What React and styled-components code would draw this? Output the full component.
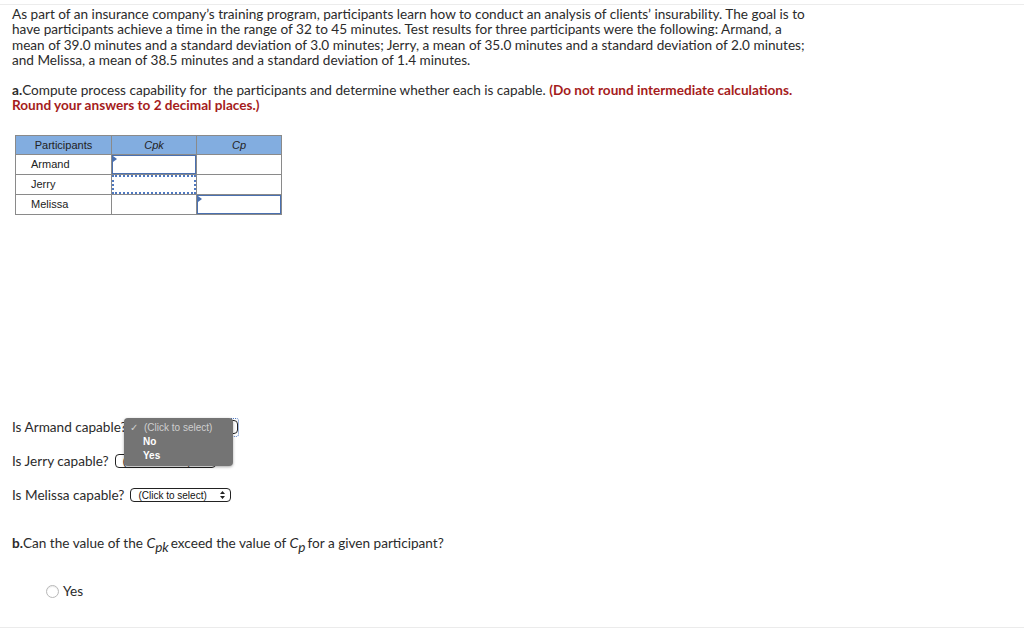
import React from "react";
import styled, { createGlobalStyle } from "styled-components";

const Global = createGlobalStyle`
  html, body { margin: 0; padding: 0; background: #fff; }
  body { font-family: Lato, "Open Sans", "Liberation Sans", sans-serif; color: #2b2b2b; }
`;

const Page = styled.div`
  width: 1024px;
  height: 632px;
  box-sizing: border-box;
  border-top: 1px solid #ececec;
  margin-top: 4px;
  position: relative;
  overflow: hidden;
`;

const Content = styled.div`
  padding: 2px 12px 0 12px;
  height: 623px;
  box-sizing: border-box;
  border-bottom: 1px solid #ebebeb;
`;

const Para = styled.p`
  margin: 0;
  font-size: 13.6px;
  line-height: 15.3px;
`;

const PartA = styled(Para)`
  margin-top: 15px;
`;

const Red = styled.b`
  color: #a51c1c;
  font-weight: 700;
`;

const Table = styled.table`
  border-collapse: collapse;
  margin: 21px 0 0 3px;
  font-family: "Liberation Sans", Arial, sans-serif;
  font-size: 11px;
  color: #222;
`;

const Th = styled.th`
  background: #82ade0;
  border: 1px solid #8a8a8a;
  font-weight: 400;
  font-style: ${(p) => (p.$italic ? "italic" : "normal")};
  height: 18px;
  width: ${(p) => p.$w}px;
  padding: 0;
  text-align: center;
`;

const Td = styled.td`
  border: 1px solid #8a8a8a;
  height: 19px;
  padding: 0 0 0 ${(p) => (p.$label ? 15 : 0)}px;
  position: relative;
`;

const Cell = styled.div`
  position: absolute;
  inset: 0;
  border: ${(p) => (p.$dotted ? "2px dotted #4e78c0" : "1px solid #4a70b0")};
  &::before {
    content: "";
    display: ${(p) => (p.$marker ? "block" : "none")};
    position: absolute;
    left: 0;
    top: 0;
    border-left: 4px solid #4a70b0;
    border-top: 3px solid transparent;
    border-bottom: 3px solid transparent;
  }
`;

const Questions = styled.div`
  margin-top: 204px;
  display: flex;
  flex-direction: column;
  gap: 18px;
  position: relative;
`;

const QRow = styled.div`
  display: flex;
  align-items: center;
  gap: 6px;
  font-size: 13.6px;
  height: 16px;
  position: relative;
`;

const Select = styled.div`
  width: ${(p) => p.$w}px;
  height: 14px;
  box-sizing: border-box;
  border: 1px solid #222;
  border-radius: 4px;
  display: flex;
  align-items: center;
  justify-content: space-between;
  padding: 0 5px 0 7px;
  font-family: "Liberation Sans", Arial, sans-serif;
  font-size: 10px;
  color: #111;
  margin-top: 1px;
  flex-shrink: 0;
`;

const Arrows = () => (
  <svg width="5" height="8" viewBox="0 0 5 8">
    <path d="M2.5 0 L5 3 H0 Z M2.5 8 L5 5 H0 Z" fill="#222" />
  </svg>
);

const Focus = styled.div`
  position: absolute;
  left: 219px;
  top: -1px;
  width: 7px;
  height: 17px;
  border: 1px dotted #4e78c0;
  border-left: none;
  border-radius: 0 3px 3px 0;
`;

const Menu = styled.div`
  position: absolute;
  left: 112px;
  top: -1px;
  width: 109px;
  height: 48px;
  background: #747474;
  border-radius: 4px;
  box-shadow: 0 1px 3px rgba(0, 0, 0, 0.35);
  padding-top: 3px;
  box-sizing: border-box;
  font-family: "Liberation Sans", Arial, sans-serif;
  font-size: 10px;
  z-index: 2;
`;

const MenuItem = styled.div`
  height: 14px;
  line-height: 14px;
  padding-left: ${(p) => (p.$check ? 6 : 19)}px;
  color: ${(p) => (p.$dim ? "#cfcfcf" : "#fff")};
  font-weight: ${(p) => (p.$dim ? 400 : 700)};
  display: flex;
  gap: 6px;
`;

const PartB = styled(Para)`
  margin-top: 32px;
`;

const Sym = styled.i`
  font-style: italic;
  font-size: 14px;
`;

const Sub = styled.span`
  font-style: italic;
  font-size: 13.6px;
  position: relative;
  top: 4px;
  margin-right: 2px;
`;

const RadioRow = styled.label`
  display: flex;
  align-items: center;
  gap: 4px;
  margin: 32px 0 0 34px;
  font-size: 13.6px;
`;

const Radio = styled.span`
  width: 11px;
  height: 11px;
  border-radius: 50%;
  border: 1px solid #b8b8b8;
  box-shadow: inset 0 1px 1px rgba(0,0,0,0.08);
  background: #fff;
`;

export default function App() {
  return (
    <Page>
      <Global />
      <Content>
        <Para>
          As part of an insurance company’s training program, participants learn how to conduct an analysis of clients’ insurability. The goal is to
          <br />
          have participants achieve a time in the range of 32 to 45 minutes. Test results for three participants were the following: Armand, a
          <br />
          mean of 39.0 minutes and a standard deviation of 3.0 minutes; Jerry, a mean of 35.0 minutes and a standard deviation of 2.0 minutes;
          <br />
          and Melissa, a mean of 38.5 minutes and a standard deviation of 1.4 minutes.
        </Para>
        <PartA>
          <b>a.</b>Compute process capability for&nbsp; the participants and determine whether each is capable.{" "}
          <Red>(Do not round intermediate calculations.</Red>
          <br />
          <Red>Round your answers to 2 decimal places.)</Red>
        </PartA>
        <Table>
          <thead>
            <tr>
              <Th $w={95}>Participants</Th>
              <Th $w={84} $italic>Cpk</Th>
              <Th $w={84} $italic>Cp</Th>
            </tr>
          </thead>
          <tbody>
            <tr>
              <Td $label>Armand</Td>
              <Td><Cell $marker /></Td>
              <Td />
            </tr>
            <tr>
              <Td $label>Jerry</Td>
              <Td><Cell $dotted /></Td>
              <Td />
            </tr>
            <tr>
              <Td $label>Melissa</Td>
              <Td />
              <Td><Cell $marker /></Td>
            </tr>
          </tbody>
        </Table>
        <Questions>
          <QRow>
            Is Armand capable?
            <Select $w={105}><span>(Click to select)</span><Arrows /></Select>
            <Focus />
            <Menu>
              <MenuItem $check $dim><span>✓</span><span>(Click to select)</span></MenuItem>
              <MenuItem>No</MenuItem>
              <MenuItem>Yes</MenuItem>
            </Menu>
          </QRow>
          <QRow>
            Is Jerry capable?
            <Select $w={101}><span>(Click to select)</span><Arrows /></Select>
          </QRow>
          <QRow>
            Is Melissa capable?
            <Select $w={101}><span>(Click to select)</span><Arrows /></Select>
          </QRow>
        </Questions>
        <PartB>
          <b>b.</b>Can the value of the <Sym>C</Sym><Sub>pk</Sub>exceed the value of <Sym>C</Sym><Sub>p</Sub>for a given participant?
        </PartB>
        <RadioRow>
          <Radio />
          Yes
        </RadioRow>
      </Content>
    </Page>
  );
}
